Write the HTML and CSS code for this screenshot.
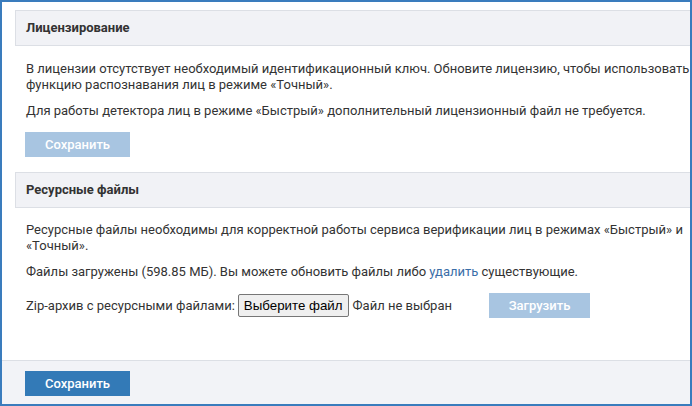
FILE: index.html
```html
<!DOCTYPE html>
<html lang="ru">
<head>
<meta charset="utf-8">
<link rel="stylesheet" href="styles.css">
</head>
<body>
<div class="frame">
  <div class="content">
    <div class="section-header">Лицензирование</div>
    <div class="section-body">
      <p class="text">В лицензии отсутствует необходимый идентификационный ключ. Обновите лицензию, чтобы использовать функцию распознавания лиц в режиме «Точный».</p>
      <p class="text">Для работы детектора лиц в режиме «Быстрый» дополнительный лицензионный файл не требуется.</p>
      <button class="btn btn-disabled">Сохранить</button>
    </div>
    <div class="section-header">Ресурсные файлы</div>
    <div class="section-body second">
      <p class="text">Ресурсные файлы необходимы для корректной работы сервиса верификации лиц в режимах «Быстрый» и «Точный».</p>
      <p class="text">Файлы загружены (598.85 МБ). Вы можете обновить файлы либо <a class="link" href="#">удалить</a> существующие.</p>
      <div class="upload-row">
        <span class="label">Zip-архив с ресурсными файлами:</span>
        <span class="file-btn">Выберите файл</span>
        <span class="file-name">Файл не выбран</span>
        <button class="btn btn-disabled btn-upload">Загрузить</button>
      </div>
    </div>
  </div>
  <div class="footer">
    <button class="btn btn-primary">Сохранить</button>
  </div>
</div>
</body>
</html>
```
FILE: styles.css
```css
html, body {
  margin: 0;
  padding: 0;
  background: #ffffff;
}
body {
  font-family: Roboto, "Liberation Sans", Arial, sans-serif;
  font-size: 13px;
  color: #333333;
}
.frame {
  width: 692px;
  height: 406px;
  box-sizing: border-box;
  border: 2px solid #3a7cbd;
  overflow: hidden;
  display: flex;
  flex-direction: column;
  background: #ffffff;
}
.content {
  padding: 8px 0 0 13px;
  flex: 1;
}
.section-header {
  height: 36px;
  box-sizing: border-box;
  background: #f1f2f6;
  border: 1px solid #dcdfe5;
  border-right: none;
  padding-left: 10px;
  line-height: 33px;
  font-weight: bold;
  color: #333333;
}
.section-body {
  padding: 15px 0 15px 11px;
}
.section-body.second {
  padding-top: 14px;
}
.text {
  margin: 0 0 10px 0;
  line-height: 16px;
}
.btn {
  font-family: Roboto, "Liberation Sans", Arial, sans-serif;
  font-size: 13px;
  font-weight: 500;
  color: #ffffff;
  border: none;
  width: 105px;
  height: 25px;
  padding: 0;
  display: block;
}
.section-body .btn {
  margin: 13px 0 0 -1px;
}
.btn-disabled {
  background: #a8c5e1;
}
.btn-primary {
  background: #337ab7;
}
.link {
  color: #3a6ea8;
  text-decoration: none;
}
.upload-row {
  display: flex;
  align-items: center;
  margin-top: 13px;
  height: 25px;
}
.section-body .upload-row .btn-upload {
  margin: 0 0 0 37px;
  width: 101px;
}
.file-btn {
  font-family: "Liberation Sans", Arial, sans-serif;
  font-size: 13.3px;
  color: #000000;
  background: #efefef;
  border: 1px solid #767676;
  border-radius: 2px;
  height: 23px;
  box-sizing: border-box;
  line-height: 21px;
  padding: 0 5px;
  margin: 0 4px 0 3px;
}
.file-name {
  line-height: 16px;
}
.footer {
  height: 44px;
  box-sizing: border-box;
  border-top: 1px solid #dcdfe5;
  background: #f2f3f7;
  padding: 10px 0 0 23px;
}
```
